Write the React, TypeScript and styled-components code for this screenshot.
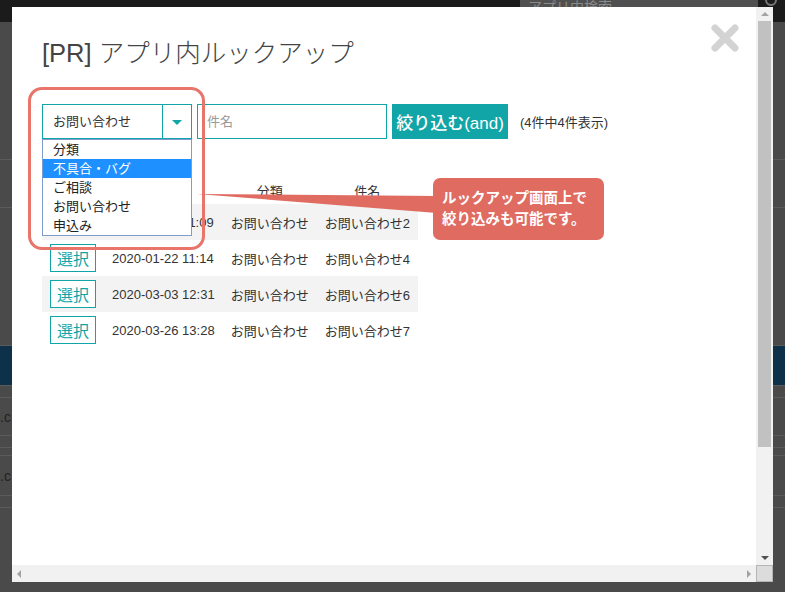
import React from "react";
import styled, { createGlobalStyle } from "styled-components";

const FONT = `"Liberation Sans", "Noto Sans CJK JP", sans-serif`;
const TEAL = "#12a5a7";
const CORAL = "#e06b61";

const GlobalStyle = createGlobalStyle`
  html, body { margin: 0; padding: 0; }
  body {
    width: 785px;
    height: 592px;
    overflow: hidden;
    background: #4a4a4a;
    font-family: ${FONT};
    color: #333;
  }
  * { box-sizing: border-box; }
`;

const Page = styled.div`
  width: 785px;
  height: 592px;
  display: flex;
  flex-direction: column;
`;

const TopBar = styled.div`
  height: 22px;
  background: #1b1b1b;
  display: flex;
  align-items: center;
  padding-left: 520px;
`;

const SearchBox = styled.div`
  width: 238px;
  height: 22px;
  background: #505050;
  color: #8a8a8a;
  font-size: 14px;
  padding: 0 8px;
  line-height: 14px;
  overflow: hidden;
`;

const SearchIcon = styled.div`
  width: 27px;
  display: flex;
  justify-content: center;
  align-items: flex-start;
  height: 22px;
`;

const Backdrop = styled.div`
  flex: 1;
  display: flex;
  flex-direction: column;
`;

const BackRow = styled.div<{ $h: number; $bg?: string }>`
  height: ${(p) => p.$h}px;
  background: ${(p) => p.$bg || "transparent"};
  border-bottom: 1px solid #5b5b5b;
  color: #222;
  font-size: 14px;
  display: flex;
  align-items: center;
`;

const Modal = styled.div`
  position: fixed;
  left: 12px;
  top: 7px;
  width: 761px;
  height: 575px;
  background: #fff;
  display: grid;
  grid-template-columns: 1fr 17px;
  grid-template-rows: 1fr 17px;
`;

const ModalBody = styled.div`
  position: relative;
  padding: 28px 30px 0;
  overflow: hidden;
`;

const Title = styled.h1`
  margin: 0;
  font-size: 25.5px;
  line-height: 32px;
  font-weight: 300;
  color: #444;
  font-family: ${FONT};
  padding-top: 2px;
  height: 32px;
`;

const CloseButton = styled.div`
  position: absolute;
  right: 16px;
  top: 16px;
  width: 30px;
  height: 30px;
`;

const FilterRow = styled.div`
  margin-top: 37px;
  display: flex;
  align-items: center;
  gap: 5px;
  height: 35px;
`;

const SelectWrap = styled.div`
  position: relative;
  width: 150px;
  height: 35px;
`;

const SelectBox = styled.div`
  width: 150px;
  height: 35px;
  border: 1px solid ${TEAL};
  display: flex;
  align-items: stretch;
  background: #fff;
`;

const SelectValue = styled.div`
  flex: 1;
  font-size: 13px;
  line-height: 33px;
  padding-left: 10px;
  color: #333;
`;

const SelectArrow = styled.div`
  width: 29px;
  border-left: 1px solid ${TEAL};
  display: flex;
  align-items: center;
  justify-content: center;
  &::after {
    content: "";
    border-left: 5px solid transparent;
    border-right: 5px solid transparent;
    border-top: 5px solid ${TEAL};
    margin-top: 1px;
  }
`;

const OptionList = styled.ul`
  position: absolute;
  left: 0;
  top: 35px;
  width: 150px;
  margin: 0;
  padding: 0;
  list-style: none;
  background: #fff;
  border: 1px solid #7f9bd0;
  z-index: 3;
`;

const Option = styled.li<{ $active?: boolean }>`
  height: 19px;
  line-height: 19px;
  font-size: 13px;
  padding-left: 10px;
  color: ${(p) => (p.$active ? "#fff" : "#222")};
  background: ${(p) => (p.$active ? "#1e90ff" : "transparent")};
`;

const TextInput = styled.input`
  width: 190px;
  height: 35px;
  border: 1px solid ${TEAL};
  padding: 0 9px;
  font-size: 13px;
  font-family: ${FONT};
  outline: none;
  &::placeholder { color: #999; }
`;

const FilterButton = styled.button`
  width: 116px;
  height: 35px;
  border: none;
  background: ${TEAL};
  color: #fff;
  font-size: 17px;
  font-family: ${FONT};
  font-weight: 500;
  padding: 0;
  white-space: nowrap;
`;

const Count = styled.span`
  margin-left: 7px;
  font-size: 13px;
  color: #333;
`;

const Table = styled.table`
  margin-top: 37px;
  border-collapse: collapse;
  font-size: 13px;
  color: #333;
`;

const HeadCell = styled.th`
  height: 28px;
  font-weight: normal;
  text-align: center;
  padding: 0 8px;
  vertical-align: middle;
`;

const Row = styled.tr<{ $shade?: boolean }>`
  background: ${(p) => (p.$shade ? "#f3f3f3" : "#fff")};
`;

const Cell = styled.td`
  height: 36px;
  padding: 0 8px;
  white-space: nowrap;
  vertical-align: middle;
`;

const PickButton = styled.button`
  width: 46px;
  height: 28px;
  border: 1px solid ${TEAL};
  background: #fff;
  color: ${TEAL};
  font-size: 16px;
  font-family: ${FONT};
  padding: 0;
  display: block;
`;

const HighlightFrame = styled.div`
  position: absolute;
  left: 16px;
  top: 80px;
  width: 177px;
  height: 163px;
  border: 3px solid #e8746a;
  border-radius: 14px;
  z-index: 4;
`;

const Pointer = styled.svg`
  position: absolute;
  left: 180px;
  top: 180px;
  z-index: 4;
`;

const Callout = styled.div`
  position: absolute;
  left: 421px;
  top: 171px;
  width: 171px;
  height: 62px;
  background: ${CORAL};
  border-radius: 7px;
  color: #fff;
  font-weight: bold;
  font-size: 14.5px;
  line-height: 21px;
  padding: 10px 0 0 9px;
  z-index: 4;
`;

const VScroll = styled.div`
  background: #f1f1f1;
  display: flex;
  flex-direction: column;
  align-items: center;
  padding: 5px 2px;
`;

const Thumb = styled.div`
  width: 13px;
  height: 426px;
  background: #c1c1c1;
  margin-top: 5px;
`;

const Spacer = styled.div`
  flex: 1;
`;

const HScroll = styled.div`
  background: #f1f1f1;
  display: flex;
  align-items: center;
  justify-content: space-between;
  padding: 0 5px;
`;

const Corner = styled.div`
  background: #dcdcdc;
  border: 1px solid #b5b5b5;
`;

const Arrow = styled.div<{ $dir: "up" | "down" | "left" | "right" }>`
  width: 0;
  height: 0;
  ${(p) =>
    p.$dir === "up"
      ? "border-left:4px solid transparent;border-right:4px solid transparent;border-bottom:4px solid #a3a3a3;"
      : p.$dir === "down"
      ? "border-left:4px solid transparent;border-right:4px solid transparent;border-top:4px solid #505050;"
      : p.$dir === "left"
      ? "border-top:4px solid transparent;border-bottom:4px solid transparent;border-right:4px solid #a3a3a3;"
      : "border-top:4px solid transparent;border-bottom:4px solid transparent;border-left:4px solid #a3a3a3;"}
`;

const rows = [
  { date: "2020-01-10 11:09", cat: "お問い合わせ", subj: "お問い合わせ2" },
  { date: "2020-01-22 11:14", cat: "お問い合わせ", subj: "お問い合わせ4" },
  { date: "2020-03-03 12:31", cat: "お問い合わせ", subj: "お問い合わせ6" },
  { date: "2020-03-26 13:28", cat: "お問い合わせ", subj: "お問い合わせ7" },
];

const options = ["分類", "不具合・バグ", "ご相談", "お問い合わせ", "申込み"];

export default function App() {
  return (
    <>
      <GlobalStyle />
      <Page>
        <TopBar>
          <SearchBox>アプリ内検索</SearchBox>
          <SearchIcon>
            <svg width="16" height="10" viewBox="0 0 16 10">
              <circle cx="7" cy="0" r="5" fill="none" stroke="#777" strokeWidth="2" />
            </svg>
          </SearchIcon>
        </TopBar>
        <Backdrop>
          <BackRow $h={138} />
          <BackRow $h={48} />
          <BackRow $h={138} />
          <BackRow $h={40} $bg="#0c3149" />
          <BackRow $h={12} />
          <BackRow $h={38}>.c</BackRow>
          <BackRow $h={12} />
          <BackRow $h={8} />
          <BackRow $h={40}>.c</BackRow>
          <BackRow $h={12} />
        </Backdrop>
        <Modal>
          <ModalBody>
            <Title>[PR] アプリ内ルックアップ</Title>
            <CloseButton>
              <svg width="30" height="30" viewBox="0 0 30 30">
                <path d="M5 5 L25 25 M25 5 L5 25" stroke="#d3d3d3" strokeWidth="7" strokeLinecap="round" />
              </svg>
            </CloseButton>
            <FilterRow>
              <SelectWrap>
                <SelectBox>
                  <SelectValue>お問い合わせ</SelectValue>
                  <SelectArrow />
                </SelectBox>
                <OptionList>
                  {options.map((o, i) => (
                    <Option key={o} $active={i === 1}>
                      {o}
                    </Option>
                  ))}
                </OptionList>
              </SelectWrap>
              <TextInput placeholder="件名" />
              <FilterButton>絞り込む(and)</FilterButton>
              <Count>(4件中4件表示)</Count>
            </FilterRow>
            <Table>
              <thead>
                <tr>
                  <HeadCell />
                  <HeadCell />
                  <HeadCell>分類</HeadCell>
                  <HeadCell>件名</HeadCell>
                </tr>
              </thead>
              <tbody>
                {rows.map((r, i) => (
                  <Row key={i} $shade={i % 2 === 0}>
                    <Cell>
                      <PickButton>選択</PickButton>
                    </Cell>
                    <Cell>{r.date}</Cell>
                    <Cell>{r.cat}</Cell>
                    <Cell>{r.subj}</Cell>
                  </Row>
                ))}
              </tbody>
            </Table>
            <HighlightFrame />
            <Pointer width="250" height="30" viewBox="0 0 250 30">
              <polygon points="5,7 245,9 245,26" fill={CORAL} />
            </Pointer>
            <Callout>
              ルックアップ画面上で
              <br />
              絞り込みも可能です。
            </Callout>
          </ModalBody>
          <VScroll>
            <Arrow $dir="up" />
            <Thumb />
            <Spacer />
            <Arrow $dir="down" />
          </VScroll>
          <HScroll>
            <Arrow $dir="left" />
            <Arrow $dir="right" />
          </HScroll>
          <Corner />
        </Modal>
      </Page>
    </>
  );
}
